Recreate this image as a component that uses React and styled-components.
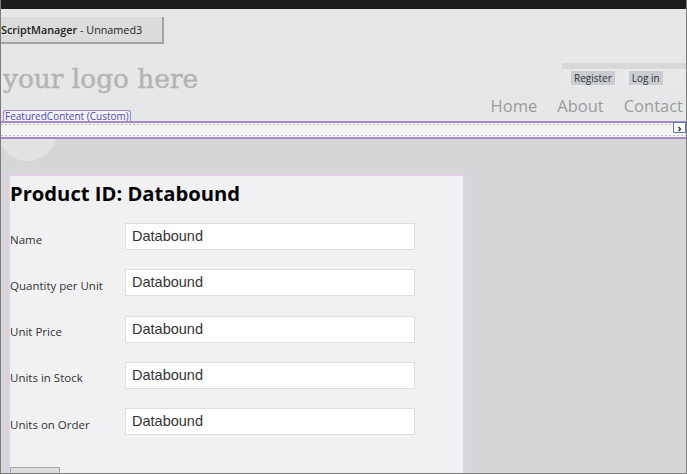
import React from 'react'
import styled, { createGlobalStyle } from 'styled-components'

const GlobalStyle = createGlobalStyle`
    html, body {
        margin: 0;
        padding: 0;
        background: #d6d5d8;
    }
    * {
        box-sizing: border-box;
    }
`

const fields = [
    'Name',
    'Quantity per Unit',
    'Unit Price',
    'Units in Stock',
    'Units on Order',
]

const App = () => {
    return (
        <Frame>
            <GlobalStyle />
            <TopStrip />
            <Header>
                <ScriptBox>
                    <b>ScriptManager</b> - Unnamed3
                </ScriptBox>
                <Masthead>
                    <div className="left">
                        <Logo>your logo here</Logo>
                        <Tag>FeaturedContent (Custom)</Tag>
                    </div>
                    <div className="right">
                        <LoginBar>
                            <LoginItem>Register</LoginItem>
                            <LoginItem>Log in</LoginItem>
                        </LoginBar>
                        <Nav>
                            <a>Home</a>
                            <a>About</a>
                            <a>Contact</a>
                        </Nav>
                    </div>
                </Masthead>
            </Header>
            <FeaturedBar>
                <span className="arrow">›</span>
            </FeaturedBar>
            <Main>
                <Circle />
                <Panel>
                    <Title>Product ID: Databound</Title>
                    <Fields>
                        {fields.map(label => (
                            <Row key={label}>
                                <Label>{label}</Label>
                                <Input>Databound</Input>
                            </Row>
                        ))}
                    </Fields>
                    <Button />
                </Panel>
            </Main>
        </Frame>
    )
}

const Frame = styled.div`
    width: 687px;
    height: 474px;
    overflow: hidden;
    display: flex;
    flex-direction: column;
    background: #d6d5d8;
    border-left: 1px solid #7c7c7c;
    border-right: 1px solid #7c7c7c;
    border-bottom: 1px solid #7c7c7c;
    font-family: 'Open Sans', 'Noto Sans', sans-serif;
`

const TopStrip = styled.div`
    height: 9px;
    flex: none;
    background: #1c1c1c;
`

const Header = styled.div`
    height: 112px;
    flex: none;
    background: #e6e7e8;
    padding-top: 8px;
`

const ScriptBox = styled.div`
    width: 164px;
    height: 27px;
    margin-left: -1px;
    padding-left: 1px;
    display: flex;
    align-items: center;
    background: #dcdcdc;
    border-right: 2px solid #a3a3a3;
    border-bottom: 2px solid #a3a3a3;
    font-size: 10.8px;
    color: #222;
    white-space: pre;
    b {
        font-weight: 600;
    }
`

const Masthead = styled.div`
    display: flex;
    justify-content: space-between;
    .left {
        display: flex;
        flex-direction: column;
        align-items: flex-start;
        padding-left: 2px;
    }
    .right {
        display: flex;
        flex-direction: column;
        align-items: flex-end;
    }
`

const Logo = styled.div`
    margin-top: 20px;
    height: 30px;
    line-height: 30px;
    font-family: 'DejaVu Serif', serif;
    font-size: 26.4px;
    color: #b4b4b4;
    -webkit-text-stroke: 0.5px #b4b4b4;
`

const Tag = styled.div`
    margin-top: 16px;
    height: 12px;
    padding: 0 1px;
    line-height: 10px;
    font-size: 10px;
    color: #4c4cae;
    background: #f3f3f5;
    border: 1px solid #a283c8;
    border-bottom: none;
    border-radius: 3px 3px 0 0;
    white-space: nowrap;
`

const LoginBar = styled.div`
    margin-top: 19px;
    width: 124px;
    height: 23px;
    display: flex;
    gap: 14px;
    padding: 2px 0 0 9px;
    background: #e9e9ea;
    border-top: 6px solid #d8d8d9;
`

const LoginItem = styled.span`
    height: 14px;
    padding: 0 3px;
    line-height: 14px;
    font-size: 10px;
    color: #333;
    background: #c9cdd1;
`

const Nav = styled.nav`
    margin-top: 10px;
    margin-right: 3px;
    display: flex;
    gap: 20px;
    a {
        font-size: 16.5px;
        line-height: 20px;
        color: #9c9c9c;
    }
`

const FeaturedBar = styled.div`
    height: 18px;
    flex: none;
    position: relative;
    z-index: 1;
    background: #f3f3f5;
    border-top: 2px solid #a887c9;
    border-bottom: 2px solid #a887c9;
    background-image: repeating-linear-gradient(
            90deg,
            #bdbdbd 0 2px,
            transparent 2px 4px
        ),
        repeating-linear-gradient(90deg, #bdbdbd 0 2px, transparent 2px 4px);
    background-size: 100% 1px, 100% 1px;
    background-position: 0 1px, 0 12px;
    background-repeat: no-repeat;
    .arrow {
        position: absolute;
        right: 0;
        top: -1px;
        width: 13px;
        height: 11px;
        display: flex;
        align-items: center;
        justify-content: center;
        font-size: 11px;
        line-height: 1;
        font-weight: 700;
        color: #333;
        background: #fff;
        border: 1px solid #5e7eb9;
    }
`

const Main = styled.div`
    flex: 1;
    position: relative;
    overflow: hidden;
    padding: 35px 0 0 7px;
`

const Circle = styled.div`
    position: absolute;
    left: -3px;
    top: -37px;
    width: 59px;
    height: 59px;
    border-radius: 50%;
    background: #e2e2e4;
`

const Panel = styled.div`
    position: relative;
    width: 457px;
    height: 320px;
    background: #f1f1f3;
    border: 2px solid #e2d0e9;
    border-bottom: none;
`

const Title = styled.h1`
    margin: 0;
    padding-top: 3px;
    height: 47px;
    font-size: 20.2px;
    line-height: 28px;
    font-weight: 700;
    color: #000;
`

const Fields = styled.div`
    display: grid;
    row-gap: 19.3px;
`

const Row = styled.div`
    display: grid;
    grid-template-columns: 115px 290px;
    align-items: center;
    height: 27px;
`

const Label = styled.span`
    padding-top: 5px;
    font-size: 11.5px;
    color: #333;
`

const Input = styled.div`
    height: 27px;
    padding-left: 6px;
    line-height: 25px;
    background: #fff;
    border: 1px solid #dedede;
    font-family: 'Liberation Sans', Arial, sans-serif;
    font-size: 14.5px;
    color: #333;
`

const Button = styled.div`
    margin-top: 32px;
    width: 50px;
    height: 12px;
    background: #dcdcdc;
    border: 1px solid #a9a9a9;
`

export default App
